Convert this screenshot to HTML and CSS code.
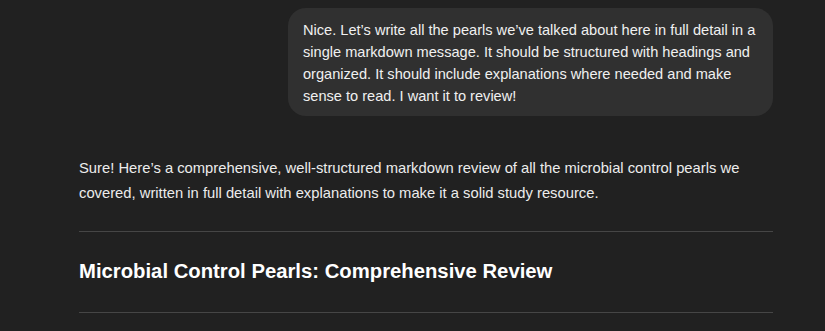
FILE: index.html
```html
<!DOCTYPE html>
<html>
<head>
<meta charset="utf-8">
<link rel="stylesheet" href="styles.css">
</head>
<body>
<main class="thread">
  <div class="user-row">
    <div class="bubble">Nice. Let’s write all the pearls we’ve talked about here in full detail in a single markdown message. It should be structured with headings and organized. It should include explanations where needed and make sense to read. I want it to review!</div>
  </div>
  <div class="reply">
    <p class="intro">Sure! Here’s a comprehensive, well-structured markdown review of all the microbial control pearls we covered, written in full detail with explanations to make it a solid study resource.</p>
    <hr class="rule rule-top">
    <h2 class="heading">Microbial Control Pearls: Comprehensive Review</h2>
    <hr class="rule">
  </div>
</main>
</body>
</html>
```
FILE: styles.css
```css
html, body {
  margin: 0;
  padding: 0;
  background: #212121;
  color: #ececec;
  font-family: "Liberation Sans", Arial, sans-serif;
  -webkit-font-smoothing: antialiased;
}
.thread {
  width: 694px;
  margin-left: 79px;
  padding-top: 8px;
}
.user-row {
  display: flex;
  justify-content: flex-end;
}
.bubble {
  width: 458px;
  background: #303030;
  border-radius: 18px;
  padding: 11px 12px 9px 15px;
  font-size: 14.6px;
  line-height: 22px;
  color: #f0f0f0;
}
.reply {
  padding-top: 40px;
}
.intro {
  margin: 0;
  font-size: 14.78px;
  line-height: 25px;
  color: #ececec;
}
.rule {
  border: none;
  border-top: 1px solid #464646;
  margin: 0;
  height: 0;
}
.rule-top {
  margin-top: 25px;
}
.heading {
  margin: 25px 0 27px 0;
  font-size: 20.3px;
  line-height: 28px;
  font-weight: 700;
  color: #ffffff;
}
```
